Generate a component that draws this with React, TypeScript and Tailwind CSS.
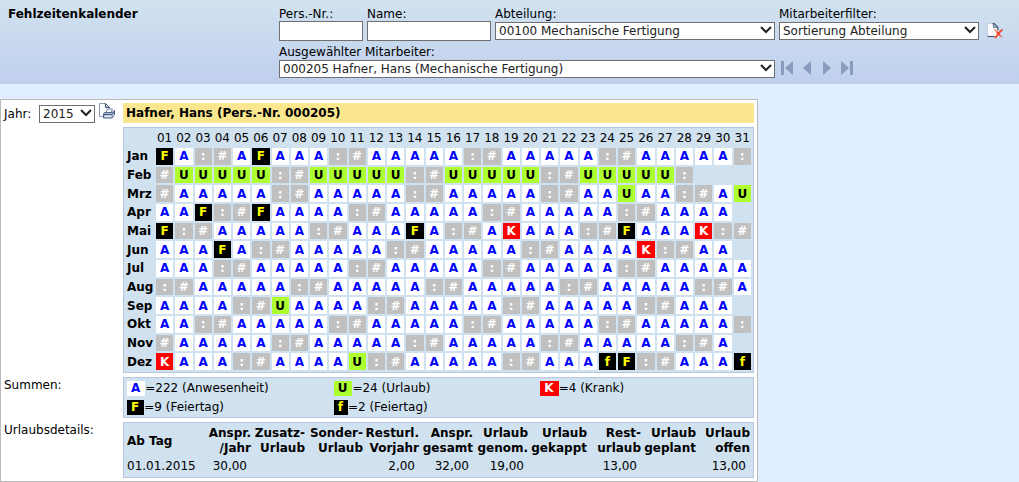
import type { ReactNode } from 'react'

const months = [
  { name: 'Jan', days: 'FA:#AFAAA:#AAAAA:#AAAAA:#AAAAA:' },
  { name: 'Feb', days: '#UUUUU:#UUUUU:#UUUUU:#UUUUU:' },
  { name: 'Mrz', days: '#AAAAA:#AAAAA:#AAAAA:#AAUAA:#AU' },
  { name: 'Apr', days: 'AAF:#FAAAA:#AAAAA:#AAAAA:#AAAA' },
  { name: 'Mai', days: 'F:#AAAAA:#AAAFA:#AKAAA:#FAAAK:#' },
  { name: 'Jun', days: 'AAAFA:#AAAAA:#AAAAA:#AAAAK:#AA' },
  { name: 'Jul', days: 'AAA:#AAAAA:#AAAAA:#AAAAA:#AAAAA' },
  { name: 'Aug', days: ':#AAAAA:#AAAAA:#AAAAA:#AAAAA:#A' },
  { name: 'Sep', days: 'AAAA:#UAAAA:#AAAAA:#AAAAA:#AAA' },
  { name: 'Okt', days: 'AA:#AAAAA:#AAAAA:#AAAAA:#AAAAA:' },
  { name: 'Nov', days: '#AAAAA:#AAAAA:#AAAAA:#AAAAA:#A' },
  { name: 'Dez', days: 'KAAA:#AAAAU:#AAAAA:#AAAfF:#AAAf' },
]

const dayNumbers = Array.from({ length: 31 }, (_, i) => String(i + 1).padStart(2, '0'))

const codeColors: Record<string, string> = {
  A: 'bg-white text-[#0000ff]',
  U: 'bg-[#adff2f] text-black',
  K: 'bg-[#ff0000] text-white',
  F: 'bg-black text-[#ffff00]',
  f: 'bg-black text-[#ffff00]',
  ':': 'bg-[#c0c0c0] text-white',
  '#': 'bg-[#c0c0c0] text-white',
}

const totals = [
  { code: 'A', text: '=222 (Anwesenheit)' },
  { code: 'U', text: '=24 (Urlaub)' },
  { code: 'K', text: '=4 (Krank)' },
  { code: 'F', text: '=9 (Feiertag)' },
  { code: 'f', text: '=2 (Feiertag)' },
]

const vacation = [
  { top: 'Anspr.', bottom: '/Jahr', value: '30,00', width: 'w-[49px]' },
  { top: 'Zusatz-', bottom: 'Urlaub', value: '', width: 'w-[54px]' },
  { top: 'Sonder-', bottom: 'Urlaub', value: '', width: 'w-[58px]' },
  { top: 'Resturl.', bottom: 'Vorjahr', value: '2,00', width: 'w-[56px]' },
  { top: 'Anspr.', bottom: 'gesamt', value: '32,00', width: 'w-[54px]' },
  { top: 'Urlaub', bottom: 'genom.', value: '19,00', width: 'w-[55px]' },
  { top: 'Urlaub', bottom: 'gekappt', value: '', width: 'w-[59px]' },
  { top: 'Rest-', bottom: 'urlaub', value: '13,00', width: 'w-[54px]' },
  { top: 'Urlaub', bottom: 'geplant', value: '', width: 'w-[55px]' },
  { top: 'Urlaub', bottom: 'offen', value: '13,00', width: 'w-[54px]' },
]

function Select({ id, value }: { id: string; value: string }) {
  return (
    <div className="relative">
      <select
        id={id}
        className="block h-[18px] w-full appearance-none border border-[#707070] bg-white pl-[3px] pr-4 leading-4 text-[#222]"
      >
        <option>{value}</option>
      </select>
      <svg
        className="pointer-events-none absolute right-[3px] top-1 h-2 w-3"
        viewBox="0 0 12 8"
        fill="none"
        stroke="#222"
        strokeWidth="2"
      >
        <path d="M1 1l5 5 5-5" />
      </svg>
    </div>
  )
}

function Field({ id, label, children }: { id: string; label: string; children: ReactNode }) {
  return (
    <div>
      <label htmlFor={id} className="block h-[15px] whitespace-nowrap leading-[15px]">
        {label}
      </label>
      {children}
    </div>
  )
}

function TextField({ id, label }: { id: string; label: string }) {
  return (
    <div>
      <label htmlFor={id} className="block h-[14px] whitespace-nowrap leading-[14px]">
        {label}
      </label>
      <input id={id} type="text" className="block h-5 w-full border border-[#707070] bg-white px-1" />
    </div>
  )
}

function ClearIcon() {
  return (
    <svg className="h-4 w-4" viewBox="0 0 16 16">
      <path d="M.5.5h6.500l4 4v9H.5z" fill="#fbfcfe" stroke="#c9cfda" />
      <path d="M5.500.7h1.700l3.600 3.600v3" fill="none" stroke="#44597a" strokeWidth="1.400" />
      <path d="M6.500 1v3.500h4z" fill="#b9cadf" stroke="#6a7f9c" />
      <path d="M.5 13.500h7" stroke="#44597a" strokeWidth="1.200" />
      <path d="M7.200 6.200l3.800 2.600 4.800 6.200-5.300-3.600z" fill="#f0452a" />
      <path d="M15.500 6.500l-4 3.800-3.500 5" fill="none" stroke="#f2492c" strokeWidth="1.800" />
      <path d="M7.200 6.200l3 2.600" stroke="#ff9a80" strokeWidth="1.600" />
    </svg>
  )
}

function PrintIcon() {
  return (
    <svg className="h-4 w-4" viewBox="0 0 16 16">
      <path d="M.5 13.500V.5h6l4 4v9z" fill="#fafbfd" stroke="#8b98b0" />
      <path d="M6.500.5v4h4z" fill="#c9d6e8" stroke="#3f5478" />
      <path d="M7 9.500l1.500-3.500h5l-1.500 3.500z" fill="#fff" stroke="#7486a6" />
      <path d="M4.500 10.500l1.500-1h7l2.500-2v4l-2.500 3.500H4.500z" fill="#b5c3da" stroke="#50648a" />
      <path d="M5 11.500h8l2-2.500" fill="none" stroke="#3f5478" />
      <path d="M6 13.200h6" stroke="#f2f6fb" />
    </svg>
  )
}

const navButtons = [
  { label: 'Erster', box: '0 0 12 14', width: 'w-3', path: 'M0 0h3v14H0zM12 0v14L4 7z' },
  { label: 'Voriger', box: '0 0 10 14', width: 'w-2.5', path: 'M8 0v14L0 7z' },
  { label: 'Nächster', box: '0 0 8 14', width: 'w-2', path: 'M0 0v14l8-7z' },
  { label: 'Letzter', box: '0 0 12 14', width: 'w-3', path: 'M9 0h3v14H9zM0 0v14l8-7z' },
]

function Header() {
  return (
    <header className="flex bg-linear-to-b from-[#d1e2ef] to-[#bfcfee] pb-1.5 pl-2 pt-[7px]">
      <h1 className="w-[271px] shrink-0 font-bold leading-[14px]">Fehlzeitenkalender</h1>
      <form className="grid grid-cols-[84px_124px_280px_200px_auto] gap-1">
        <TextField id="persnr" label="Pers.-Nr.:" />
        <TextField id="name" label="Name:" />
        <Field id="abteilung" label="Abteilung:">
          <Select id="abteilung" value="00100 Mechanische Fertigung" />
        </Field>
        <Field id="filter" label="Mitarbeiterfilter:">
          <Select id="filter" value="Sortierung Abteilung" />
        </Field>
        <button type="button" aria-label="Filter löschen" className="mt-4 h-4 pl-1">
          <ClearIcon />
        </button>
        <div className="col-span-3">
          <Field id="mitarbeiter" label="Ausgewählter Mitarbeiter:">
            <Select id="mitarbeiter" value="000205 Hafner, Hans (Mechanische Fertigung)" />
          </Field>
        </div>
        <div className="flex gap-2.5 pl-0.5 pt-4">
          {navButtons.map((b) => (
            <button key={b.label} type="button" aria-label={b.label} className="h-[14px]">
              <svg className={`h-[14px] ${b.width}`} viewBox={b.box} fill="#8a9bbd">
                <path d={b.path} />
              </svg>
            </button>
          ))}
        </div>
      </form>
    </header>
  )
}

function Calendar() {
  return (
    <div className="border border-[#b9c7de] bg-[#d0e1ef]">
      <table className="h-[244px] w-full table-fixed border-separate border-spacing-[2px] text-center leading-[15px]">
        <thead>
          <tr>
            <th className="w-7 p-0" />
            {dayNumbers.map((d) => (
              <th key={d} scope="col" className="p-0 pt-px font-normal">
                {d}
              </th>
            ))}
          </tr>
        </thead>
        <tbody>
          {months.map((m) => (
            <tr key={m.name}>
              <th scope="row" className="p-0 pl-px pt-px text-left font-bold">
                {m.name}
              </th>
              {dayNumbers.map((d, i) => (
                <td key={d} className={`p-0 pt-px font-bold ${codeColors[m.days[i]] ?? ''}`}>
                  {m.days[i]}
                </td>
              ))}
            </tr>
          ))}
        </tbody>
      </table>
    </div>
  )
}

function Totals() {
  return (
    <div className="grid grid-cols-3 gap-y-1 border border-[#b9c7de] bg-[#d0e1ef] pb-0.5 pl-[3px] pr-1.5 pt-[3px]">
      {totals.map((t) => (
        <div key={t.code} className="flex leading-[15px]">
          <span className={`pl-1 pr-[5px] font-bold ${codeColors[t.code]}`}>{t.code}</span>
          <span>{t.text}</span>
        </div>
      ))}
    </div>
  )
}

function VacationDetails() {
  return (
    <div className="border border-[#b9c7de] bg-[#d0e1ef] p-[3px]">
      <table className="w-full table-fixed text-right leading-[15px]">
        <thead>
          <tr>
            <th scope="col" className="p-0 text-left">
              Ab Tag
            </th>
            {vacation.map((v) => (
              <th key={v.top + v.bottom} scope="col" className={`whitespace-nowrap p-0 ${v.width}`}>
                {v.top}
                <br />
                {v.bottom}
              </th>
            ))}
          </tr>
        </thead>
        <tbody>
          <tr>
            <td className="p-0 pt-[3px] text-left">01.01.2015</td>
            {vacation.map((v) => (
              <td key={v.top + v.bottom} className="p-0 pr-1 pt-[3px]">
                {v.value}
              </td>
            ))}
          </tr>
        </tbody>
      </table>
    </div>
  )
}

export default function App() {
  return (
    <div className="min-h-screen bg-[#e1eeff] font-[Verdana,'DejaVu_Sans',sans-serif] text-[12px] text-black">
      <Header />
      <main className="mt-[15px] grid max-w-[758px] grid-cols-[119px_minmax(0,1fr)] gap-y-1 border border-[#bbb] bg-white p-[3px]">
        <div className="row-span-2 flex items-start">
          <label htmlFor="jahr" className="w-[35px] pt-1 leading-[15px]">
            Jahr:
          </label>
          <div className="w-14 pt-0.5">
            <Select id="jahr" value="2015" />
          </div>
          <button type="button" aria-label="Drucken" className="ml-1 h-4">
            <PrintIcon />
          </button>
        </div>
        <h2 className="bg-[#fae68e] pl-[3px] font-bold leading-5">Hafner, Hans (Pers.-Nr. 000205)</h2>
        <Calendar />
        <div className="leading-4">Summen:</div>
        <Totals />
        <div className="leading-4">Urlaubsdetails:</div>
        <VacationDetails />
      </main>
    </div>
  )
}
